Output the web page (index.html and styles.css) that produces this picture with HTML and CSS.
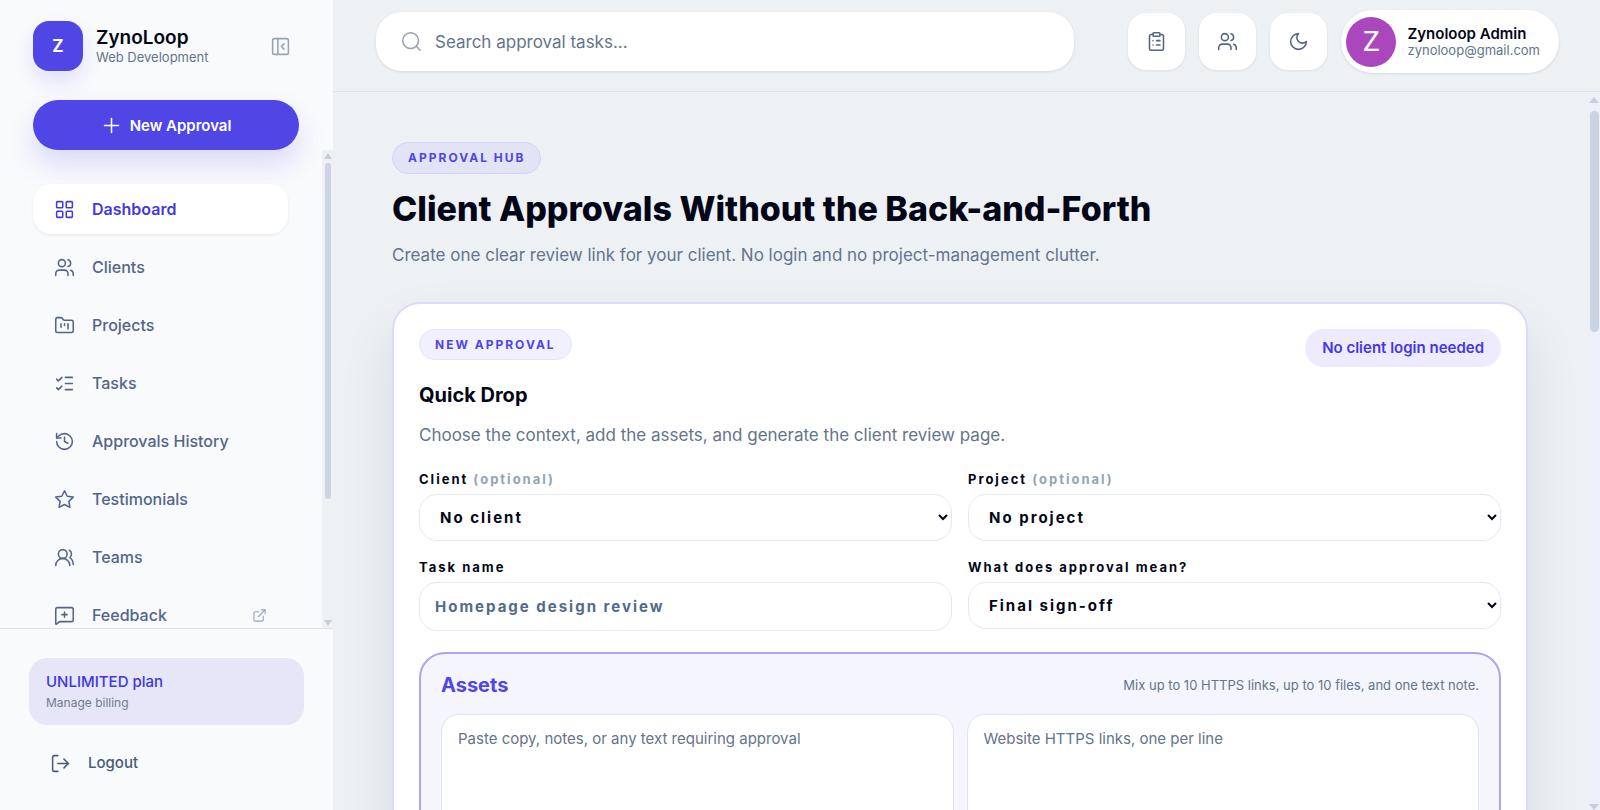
FILE: index.html
```html
<!DOCTYPE html>
<html lang="en">
  <head>
    <meta charset="UTF-8" />
    <meta name="viewport" content="width=device-width, initial-scale=1.0" />
    <title>ZynoLoop - Dashboard</title>
    <link rel="stylesheet" href="styles.css">
  </head>
  <body>
    <div class="app">
      <aside class="sidebar">
        <div class="brand">
          <div class="brand-logo">Z</div>
          <div class="brand-text">
            <div class="brand-name">ZynoLoop</div>
            <div class="brand-sub">Web Development</div>
          </div>
          <button class="collapse-btn" type="button" aria-label="Collapse sidebar">
            <svg class="icon" viewBox="0 0 24 24"><rect x="3" y="3" width="18" height="18" rx="2" /><path d="M9 3v18" /><path d="m16 15-3-3 3-3" /></svg>
          </button>
        </div>

        <button class="new-btn" type="button">
          <svg class="icon" viewBox="0 0 24 24"><path d="M4 12h16" /><path d="M12 4v16" /></svg>
          New Approval
        </button>

        <div class="nav-wrap">
          <nav class="nav">
            <a class="nav-item active" href="#">
              <svg class="icon" viewBox="0 0 24 24"><rect x="3" y="3" width="7" height="7" rx="1" /><rect x="14" y="3" width="7" height="7" rx="1" /><rect x="14" y="14" width="7" height="7" rx="1" /><rect x="3" y="14" width="7" height="7" rx="1" /></svg>
              Dashboard
            </a>
            <a class="nav-item" href="#">
              <svg class="icon" viewBox="0 0 24 24"><path d="M16 21v-2a4 4 0 0 0-4-4H6a4 4 0 0 0-4 4v2" /><circle cx="9" cy="7" r="4" /><path d="M22 21v-2a4 4 0 0 0-3-3.87" /><path d="M16 3.13a4 4 0 0 1 0 7.75" /></svg>
              Clients
            </a>
            <a class="nav-item" href="#">
              <svg class="icon" viewBox="0 0 24 24"><path d="M4 20h16a2 2 0 0 0 2-2V8a2 2 0 0 0-2-2h-7.93a2 2 0 0 1-1.66-.9l-.82-1.2A2 2 0 0 0 7.93 3H4a2 2 0 0 0-2 2v13c0 1.1.9 2 2 2Z" /><path d="M8 10v4" /><path d="M12 10v2" /><path d="M16 10v6" /></svg>
              Projects
            </a>
            <a class="nav-item" href="#">
              <svg class="icon" viewBox="0 0 24 24"><path d="m3 17 2 2 4-4" /><path d="m3 7 2 2 4-4" /><path d="M13 5h8" /><path d="M13 12h8" /><path d="M13 19h8" /></svg>
              Tasks
            </a>
            <a class="nav-item" href="#">
              <svg class="icon" viewBox="0 0 24 24"><path d="M3 12a9 9 0 1 0 9-9 9.75 9.75 0 0 0-6.74 2.74L3 8" /><path d="M3 3v5h5" /><path d="M12 7v5l4 2" /></svg>
              Approvals History
            </a>
            <a class="nav-item" href="#">
              <svg class="icon" viewBox="0 0 24 24"><path d="m12 2 3.09 6.26L22 9.27l-5 4.87 1.18 6.88L12 17.77l-6.18 3.25L7 14.14 2 9.27l6.91-1.01Z" /></svg>
              Testimonials
            </a>
            <a class="nav-item" href="#">
              <svg class="icon" viewBox="0 0 24 24"><path d="M18 21a8 8 0 0 0-16 0" /><circle cx="10" cy="8" r="5" /><path d="M22 20c0-3.37-2-6.5-4-8a5 5 0 0 0-.45-8.3" /></svg>
              Teams
            </a>
            <a class="nav-item" href="#">
              <svg class="icon" viewBox="0 0 24 24"><path d="M22 17a2 2 0 0 1-2 2H6.828a2 2 0 0 0-1.414.586l-2.202 2.202A.71.71 0 0 1 2 21.286V5a2 2 0 0 1 2-2h16a2 2 0 0 1 2 2z" /><path d="M12 8v6" /><path d="M9 11h6" /></svg>
              Feedback
              <svg class="icon external" viewBox="0 0 24 24"><path d="M15 3h6v6" /><path d="M10 14 21 3" /><path d="M18 13v6a2 2 0 0 1-2 2H5a2 2 0 0 1-2-2V8a2 2 0 0 1 2-2h6" /></svg>
            </a>
          </nav>
          <div class="scrollbar nav-scrollbar">
            <span class="arrow-up"></span>
            <span class="thumb"></span>
            <span class="arrow-down"></span>
          </div>
        </div>

        <div class="sidebar-footer">
          <a class="plan-card" href="#">
            <span class="plan-name">UNLIMITED plan</span>
            <span class="plan-link">Manage billing</span>
          </a>
          <button class="logout-btn" type="button">
            <svg class="icon" viewBox="0 0 24 24"><path d="M9 21H5a2 2 0 0 1-2-2V5a2 2 0 0 1 2-2h4" /><path d="m16 17 5-5-5-5" /><path d="M21 12H9" /></svg>
            Logout
          </button>
        </div>
      </aside>

      <div class="main">
        <header class="topbar">
          <label class="search">
            <svg class="icon" viewBox="0 0 24 24"><circle cx="11" cy="11" r="9" /><path d="m22 22-4.5-4.5" /></svg>
            <input type="text" placeholder="Search approval tasks..." aria-label="Search approval tasks" />
          </label>
          <div class="top-actions">
            <button class="icon-btn" type="button" aria-label="Tasks">
              <svg class="icon" viewBox="0 0 24 24"><rect x="8" y="2" width="8" height="4" rx="1" /><path d="M16 4h2a2 2 0 0 1 2 2v14a2 2 0 0 1-2 2H6a2 2 0 0 1-2-2V6a2 2 0 0 1 2-2h2" /><path d="M12 11h4" /><path d="M12 16h4" /><path d="M8 11h.01" /><path d="M8 16h.01" /></svg>
            </button>
            <button class="icon-btn" type="button" aria-label="Clients">
              <svg class="icon" viewBox="0 0 24 24"><path d="M16 21v-2a4 4 0 0 0-4-4H6a4 4 0 0 0-4 4v2" /><circle cx="9" cy="7" r="4" /><path d="M22 21v-2a4 4 0 0 0-3-3.87" /><path d="M16 3.13a4 4 0 0 1 0 7.75" /></svg>
            </button>
            <button class="icon-btn" type="button" aria-label="Dark mode">
              <svg class="icon" viewBox="0 0 24 24"><path d="M12 3a6 6 0 0 0 9 9 9 9 0 1 1-9-9Z" /></svg>
            </button>
            <button class="profile" type="button">
              <span class="avatar">Z</span>
              <span class="profile-text">
                <span class="profile-name">Zynoloop Admin</span>
                <span class="profile-email">zynoloop@gmail.com</span>
              </span>
            </button>
          </div>
        </header>

        <div class="content-wrap">
          <main class="content">
            <span class="badge">APPROVAL HUB</span>
            <h1>Client Approvals Without the Back-and-Forth</h1>
            <p class="lead">Create one clear review link for your client. No login and no project-management clutter.</p>

            <form class="card">
              <div class="card-head">
                <span class="badge badge-light">NEW APPROVAL</span>
                <span class="pill">No client login needed</span>
              </div>
              <h2>Quick Drop</h2>
              <p class="card-desc">Choose the context, add the assets, and generate the client review page.</p>

              <div class="fields">
                <div class="field">
                  <label for="client">Client <span class="optional">(optional)</span></label>
                  <select id="client">
                    <option>No client</option>
                  </select>
                </div>
                <div class="field">
                  <label for="project">Project <span class="optional">(optional)</span></label>
                  <select id="project">
                    <option>No project</option>
                  </select>
                </div>
                <div class="field">
                  <label for="task-name">Task name</label>
                  <input type="text" id="task-name" placeholder="Homepage design review" />
                </div>
                <div class="field">
                  <label for="meaning">What does approval mean?</label>
                  <select id="meaning">
                    <option>Final sign-off</option>
                  </select>
                </div>
              </div>

              <section class="assets">
                <div class="assets-head">
                  <h3>Assets</h3>
                  <span>Mix up to 10 HTTPS links, up to 10 files, and one text note.</span>
                </div>
                <div class="assets-grid">
                  <textarea rows="6" aria-label="Text note" placeholder="Paste copy, notes, or any text requiring approval"></textarea>
                  <textarea rows="6" aria-label="Website links" placeholder="Website HTTPS links, one per line"></textarea>
                </div>
              </section>
            </form>
          </main>
          <div class="scrollbar page-scrollbar">
            <span class="arrow-up"></span>
            <span class="thumb"></span>
            <span class="arrow-down"></span>
          </div>
        </div>
      </div>
    </div>
  </body>
</html>
```
FILE: styles.css
```css
* {
  box-sizing: border-box;
}
body {
  margin: 0;
  font-family: Inter, "Liberation Sans", sans-serif;
  font-size: 16px;
  color: #020617;
  background: #edf1f4;
}
button,
input,
select,
textarea {
  font-family: inherit;
}
button {
  border: none;
  background: none;
  padding: 0;
  cursor: pointer;
}
a {
  text-decoration: none;
}
.icon {
  width: 21px;
  height: 21px;
  flex: none;
  fill: none;
  stroke: currentColor;
  stroke-width: 1.75;
  stroke-linecap: round;
  stroke-linejoin: round;
}
.app {
  display: flex;
  height: 100vh;
  overflow: hidden;
}

/* sidebar */
.sidebar {
  width: 333px;
  flex: none;
  display: flex;
  flex-direction: column;
  background: #f9fafc;
}
.brand {
  display: flex;
  align-items: center;
  gap: 13px;
  padding: 21px 42px 0 33px;
}
.brand-logo {
  width: 50px;
  height: 50px;
  border-radius: 16px;
  background: #4f46e5;
  color: #fff;
  font-size: 17px;
  font-weight: 700;
  display: flex;
  align-items: center;
  justify-content: center;
  box-shadow: 0 10px 20px rgba(79, 70, 229, 0.14);
}
.brand-text {
  flex: 1;
}
.brand-name {
  font-size: 19px;
  line-height: 22px;
  font-weight: 600;
}
.brand-sub {
  font-size: 13px;
  line-height: 16px;
  color: #64748b;
}
.collapse-btn {
  display: flex;
  color: #94a3b8;
}
.new-btn {
  display: flex;
  align-items: center;
  justify-content: center;
  gap: 8px;
  height: 50px;
  flex: none;
  margin: 29px 34px 0 33px;
  border-radius: 25px;
  background: #4f46e5;
  color: #fff;
  font-size: 15px;
  font-weight: 600;
  box-shadow: 0 14px 28px rgba(79, 70, 229, 0.18);
}
.nav-wrap {
  flex: 1;
  min-height: 0;
  display: flex;
}
.nav {
  flex: 1;
  overflow: hidden;
  padding: 34px 34px 0 33px;
  display: flex;
  flex-direction: column;
  gap: 8px;
}
.nav-item {
  display: flex;
  align-items: center;
  gap: 17px;
  flex: none;
  padding: 13px 21px;
  line-height: 24px;
  border-radius: 18px;
  color: #53658a;
  font-weight: 500;
}
.nav-item.active {
  background: #fff;
  color: #4338e0;
  font-weight: 600;
  box-shadow: 0 1px 3px rgba(15, 23, 42, 0.08);
}
.external {
  width: 15px;
  height: 15px;
  margin-left: auto;
  color: #94a3b8;
}
.sidebar-footer {
  border-top: 1px solid #dce4ec;
  padding: 29px 29px 35px;
}
.plan-card {
  display: flex;
  flex-direction: column;
  gap: 4px;
  padding: 14px 17px;
  border-radius: 18px;
  background: #e6e6f8;
}
.plan-name {
  font-size: 15px;
  line-height: 19px;
  font-weight: 500;
  color: #4038e0;
}
.plan-link {
  font-size: 12px;
  line-height: 16px;
  color: #717c8f;
}
.logout-btn {
  display: flex;
  align-items: center;
  gap: 17px;
  margin-top: 26px;
  padding-left: 21px;
  font-size: 15px;
  line-height: 24px;
  font-weight: 500;
  color: #475b7c;
}

/* scrollbars */
.scrollbar {
  flex: none;
  display: flex;
  flex-direction: column;
  align-items: center;
}
.thumb {
  border-radius: 5px;
}
.arrow-up,
.arrow-down {
  border: 4px solid transparent;
}
.arrow-up {
  border-top: none;
  border-bottom: 6px solid #c8ced8;
}
.arrow-down {
  border-bottom: none;
  border-top: 6px solid #c8ced8;
  margin-top: auto;
}
.nav-scrollbar {
  width: 11px;
  padding: 3px 0 2px;
  background: #eef1f4;
}
.nav-scrollbar .thumb {
  width: 6px;
  height: 71%;
  margin-top: 4px;
  background: #cbd3e5;
}
.page-scrollbar {
  width: 12px;
  padding: 5px 0 0;
  background: #ecf0f8;
}
.page-scrollbar .thumb {
  width: 9px;
  height: 31%;
  margin-top: 8px;
  background: #c8d4e0;
}
.page-scrollbar .arrow-up,
.page-scrollbar .arrow-down {
  border-left-width: 5px;
  border-right-width: 5px;
}

/* top bar */
.main {
  flex: 1;
  min-width: 0;
  display: flex;
  flex-direction: column;
}
.topbar {
  display: flex;
  align-items: center;
  gap: 54px;
  padding: 10px 41px 18px 43px;
  border-bottom: 1px solid #dfe4e9;
}
.search {
  flex: 1;
  display: flex;
  align-items: center;
  gap: 13px;
  height: 59px;
  padding: 0 25px;
  border-radius: 26px;
  background: #fff;
  box-shadow: 0 1px 3px rgba(15, 23, 42, 0.1);
  color: #9aa1ad;
}
.search input {
  flex: 1;
  border: none;
  outline: none;
  padding: 0;
  background: none;
  font-size: 17px;
}
input::placeholder,
textarea::placeholder {
  color: #64748b;
  opacity: 1;
}
.top-actions {
  display: flex;
  align-items: center;
  gap: 14px;
}
.icon-btn {
  width: 57px;
  height: 57px;
  display: flex;
  align-items: center;
  justify-content: center;
  border-radius: 18px;
  background: #fff;
  color: #55657f;
  box-shadow: 0 1px 3px rgba(15, 23, 42, 0.08);
}
.profile {
  display: flex;
  align-items: center;
  gap: 11px;
  height: 63px;
  padding: 0 19px 0 5px;
  border-radius: 32px;
  background: #fff;
  text-align: left;
  box-shadow: 0 1px 3px rgba(15, 23, 42, 0.1);
}
.avatar {
  width: 50px;
  height: 50px;
  border-radius: 50%;
  background: #ab47bc;
  color: #fff;
  font-family: Roboto, sans-serif;
  font-size: 28px;
  display: flex;
  align-items: center;
  justify-content: center;
}
.profile-text {
  display: flex;
  flex-direction: column;
}
.profile-name {
  font-size: 15px;
  line-height: 17px;
  font-weight: 600;
  color: #020617;
}
.profile-email {
  font-size: 13px;
  line-height: 16px;
  color: #64748b;
}

/* content */
.content-wrap {
  flex: 1;
  min-height: 0;
  display: flex;
}
.content {
  flex: 1;
  min-width: 0;
  overflow: hidden;
  padding: 50px 60px 0 59px;
}
.badge {
  display: block;
  width: fit-content;
  padding: 7px 15px;
  border: 1px solid #d6d3f8;
  border-radius: 16px;
  background: #e2e4f5;
  color: #4f46e5;
  font-size: 12px;
  line-height: 16px;
  font-weight: 700;
  letter-spacing: 2px;
}
.badge-light {
  background: #f1f0fe;
  border-color: #e6e4fb;
  line-height: 15px;
}
h1 {
  margin: 14px 0 0;
  font-size: 34px;
  line-height: 42px;
  font-weight: 800;
}
.lead {
  margin: 12px 0 0;
  font-size: 17px;
  line-height: 26px;
  color: #64748b;
}
.card {
  margin-top: 34px;
  padding: 25px;
  border: 2px solid #dddafa;
  border-radius: 28px;
  background: #fff;
  box-shadow: 0 26px 56px rgba(15, 23, 42, 0.09);
}
.card-head {
  display: flex;
  align-items: flex-start;
  justify-content: space-between;
}
.pill {
  padding: 9px 17px;
  border-radius: 19px;
  background: #edebfd;
  color: #4338e0;
  font-size: 15px;
  line-height: 20px;
  font-weight: 600;
}
h2 {
  margin: 15px 0 0;
  font-size: 20px;
  line-height: 26px;
  font-weight: 700;
}
.card-desc {
  margin: 15px 0 0;
  font-size: 17px;
  line-height: 24px;
  color: #64748b;
}
.fields {
  display: grid;
  grid-template-columns: 1fr 1fr;
  gap: 17px 16px;
  align-items: start;
  margin-top: 23px;
}
.field {
  display: flex;
  flex-direction: column;
  gap: 6px;
  letter-spacing: 2px;
  font-weight: 700;
}
.field label {
  font-size: 13px;
  line-height: 18px;
}
.optional {
  color: #94a3b8;
}
.field select,
.field input {
  width: 100%;
  height: 47px;
  padding: 0 16px;
  border: 1px solid #e6e9ee;
  border-radius: 18px;
  background: #fff;
  color: #020617;
  font-size: 15px;
  font-weight: inherit;
  letter-spacing: inherit;
}
.field input {
  height: 49px;
  padding: 0 15px;
}
.field input::placeholder {
  color: #536a8c;
}
.assets {
  margin-top: 21px;
  padding: 19px 20px;
  border: 2px solid #aea4f3;
  border-radius: 26px;
  background: #f5f5fe;
}
.assets-head {
  display: flex;
  align-items: center;
  justify-content: space-between;
}
.assets-head span {
  font-size: 13px;
  color: #64748b;
}
h3 {
  margin: 0;
  font-size: 20px;
  line-height: 24px;
  font-weight: 700;
  color: #4f46e5;
}
.assets-grid {
  display: grid;
  grid-template-columns: 1fr 1fr;
  gap: 13px;
  margin-top: 17px;
}
.assets-grid textarea {
  padding: 13px 16px;
  border: 1px solid #e2e3f0;
  border-radius: 18px;
  background: #fff;
  font-size: 15px;
  line-height: 22px;
  resize: none;
}
```
